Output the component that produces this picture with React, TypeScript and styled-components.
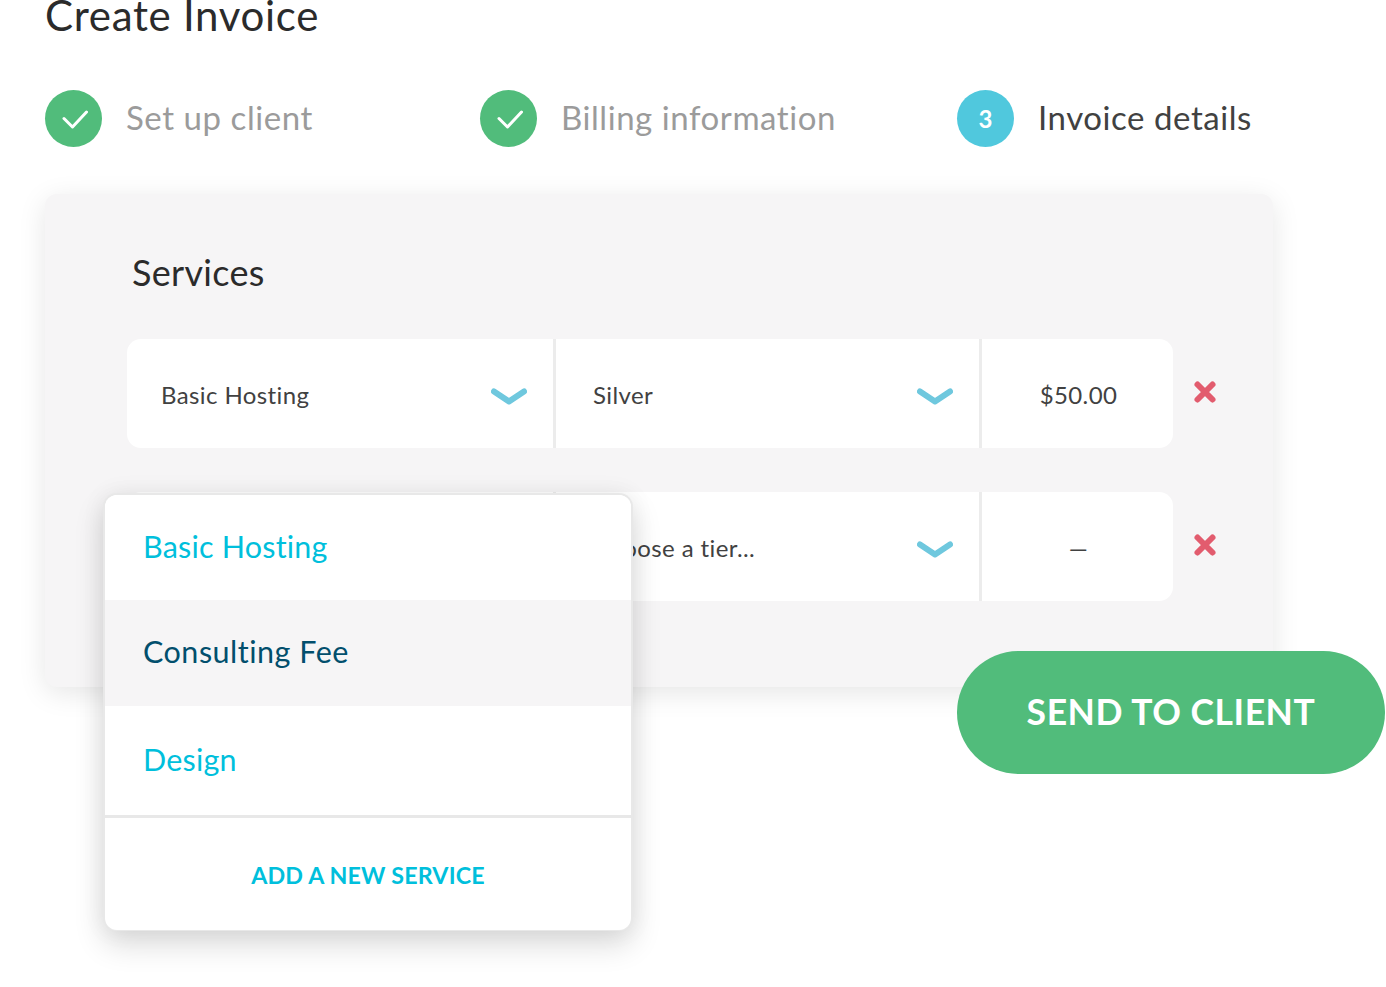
import styled, { createGlobalStyle } from 'styled-components';

const GlobalStyle = createGlobalStyle`
    html, body {
        margin: 0;
        padding: 0;
        background: #ffffff;
        overflow: hidden;
    }
    body {
        font-family: "Lato", "Open Sans", sans-serif;
    }
`;

const Page = styled.div`
    position: relative;
    width: 1386px;
    height: 987px;
    padding: 0 0 0 45px;
    box-sizing: border-box;
    overflow: hidden;
`;

const Title = styled.h1`
    margin: -10px 0 0 0;
    height: 50px;
    font-size: 42px;
    line-height: 50px;
    font-weight: 400;
    letter-spacing: 0.7px;
    color: #2b2b2b;
`;

const Stepper = styled.div`
    display: grid;
    grid-template-columns: 435px 477px auto;
    margin-top: 50px;
`;

const Step = styled.div`
    display: flex;
    align-items: center;
    gap: 24px;
`;

const StepCircle = styled.div<{ $color: string }>`
    width: 57px;
    height: 57px;
    border-radius: 50%;
    background: ${props => props.$color};
    color: #ffffff;
    display: flex;
    align-items: center;
    justify-content: center;
    font-size: 24px;
    font-weight: 700;
`;

const StepLabel = styled.span<{ $active?: boolean }>`
    margin-top: -4px;
    font-size: 33px;
    letter-spacing: 0.55px;
    color: ${props => (props.$active ? '#414141' : '#9b9b9b')};
`;

const Card = styled.section`
    position: relative;
    width: 1228px;
    height: 493px;
    margin-top: 47px;
    padding: 55px 0 0 82px;
    box-sizing: border-box;
    background: #f6f5f6;
    border-radius: 12px;
    box-shadow: 0 6px 28px rgba(0, 0, 0, 0.1);
`;

const CardTitle = styled.h2`
    margin: 0 0 0 5px;
    height: 46px;
    font-size: 36px;
    line-height: 46px;
    font-weight: 400;
    letter-spacing: 0.3px;
    color: #2b2b2b;
`;

const Rows = styled.div`
    display: flex;
    flex-direction: column;
    gap: 44px;
    margin-top: 44px;
`;

const Row = styled.div`
    display: flex;
    align-items: center;
    gap: 20px;
`;

const Fields = styled.div`
    display: grid;
    grid-template-columns: 429px 426px 191px;
    width: 1046px;
    height: 109px;
    background: #ffffff;
    border-radius: 14px;
`;

const Field = styled.div<{ $inset: number; $center?: boolean }>`
    display: flex;
    align-items: center;
    justify-content: ${props => (props.$center ? 'center' : 'space-between')};
    padding: 1px ${props => (props.$center ? 0 : 26)}px 0 ${props => props.$inset}px;
    font-size: 24px;
    letter-spacing: 0.4px;
    color: #414141;
    box-sizing: border-box;
    border-right: ${props => (props.$center ? 'none' : '3px solid #ececec')};
`;

const ChevronIcon = styled.svg`
    margin-top: 5px;
    flex: none;
`;

const Chevron = () => (
    <ChevronIcon width="36" height="18" viewBox="0 0 36 18" fill="none">
        <path d="M3 3.5 18 13.5 33 3.5" stroke="#6fc8de" strokeWidth="6" strokeLinecap="round" strokeLinejoin="round" />
    </ChevronIcon>
);

const RemoveIcon = styled.svg`
    margin-top: -3px;
    flex: none;
`;

const Remove = () => (
    <RemoveIcon width="24" height="24" viewBox="0 0 24 24" fill="none">
        <path d="M4.5 4.5 19.5 19.5M19.5 4.5 4.5 19.5" stroke="#e25c6e" strokeWidth="6" strokeLinecap="round" />
    </RemoveIcon>
);

const MenuShadow = styled.div`
    position: absolute;
    left: 58px;
    top: 299px;
    width: 530px;
    height: 438px;
    border-radius: 14px;
    background: #e8e8e8;
    box-shadow: 0 14px 30px rgba(0, 0, 0, 0.14), 0 0 24px rgba(0, 0, 0, 0.06);
`;

const Menu = styled.div`
    position: absolute;
    left: 60px;
    top: 301px;
    width: 526px;
    height: 435px;
    background: #ffffff;
    border-radius: 12px;
    overflow: hidden;
    display: flex;
    flex-direction: column;
`;

const MenuItem = styled.div<{ $height: number; $hover?: boolean }>`
    height: ${props => props.$height}px;
    flex: none;
    box-sizing: border-box;
    display: flex;
    align-items: center;
    padding: 0 0 4px 38px;
    font-size: 30.5px;
    letter-spacing: ${props => (props.$hover ? 0.5 : 0.2)}px;
    color: ${props => (props.$hover ? '#024f6d' : '#00bfdc')};
    background: ${props => (props.$hover ? '#f6f5f6' : '#ffffff')};
`;

const MenuFooter = styled.div`
    flex: 1;
    display: flex;
    align-items: center;
    justify-content: center;
    padding-top: 1px;
    border-top: 3px solid #e8e8e8;
    font-size: 23.25px;
    font-weight: 700;
    letter-spacing: 0.15px;
    color: #00bfdc;
`;

const SendButton = styled.button`
    position: absolute;
    left: 957px;
    top: 651px;
    width: 428px;
    height: 123px;
    padding: 0 0 2px;
    border: none;
    border-radius: 62px;
    background: #51bc7b;
    color: #ffffff;
    font-family: inherit;
    font-size: 35.5px;
    font-weight: 700;
    letter-spacing: 0.55px;
`;

const services = [
    { service: 'Basic Hosting', tier: 'Silver', price: '$50.00' },
    { service: 'Choose a service...', tier: 'Choose a tier...', price: '—' },
];

const steps = [
    { label: 'Set up client', done: true },
    { label: 'Billing information', done: true },
    { label: 'Invoice details', done: false },
];

export default function App() {
    return (
        <Page>
            <GlobalStyle />
            <Title>Create Invoice</Title>
            <Stepper>
                {steps.map((step, i) => (
                    <Step key={step.label}>
                        <StepCircle $color={step.done ? '#51bc7b' : '#50c8dd'}>
                            {step.done ? (
                                <svg width="28" height="22" viewBox="0 0 28 22" fill="none">
                                    <path d="M4 10.5 12.5 19 26.5 4" stroke="#fff" strokeWidth="3" strokeLinecap="round" strokeLinejoin="round" />
                                </svg>
                            ) : (
                                i + 1
                            )}
                        </StepCircle>
                        <StepLabel $active={!step.done}>{step.label}</StepLabel>
                    </Step>
                ))}
            </Stepper>
            <Card>
                <CardTitle>Services</CardTitle>
                <Rows>
                    {services.map(row => (
                        <Row key={row.service}>
                            <Fields>
                                <Field $inset={34}>
                                    {row.service}
                                    <Chevron />
                                </Field>
                                <Field $inset={37}>
                                    {row.tier}
                                    <Chevron />
                                </Field>
                                <Field $inset={2} $center>
                                    {row.price}
                                </Field>
                            </Fields>
                            <Remove />
                        </Row>
                    ))}
                </Rows>
                <MenuShadow />
                <Menu>
                    <MenuItem $height={105}>Basic Hosting</MenuItem>
                    <MenuItem $height={106} $hover>Consulting Fee</MenuItem>
                    <MenuItem $height={109}>Design</MenuItem>
                    <MenuFooter>ADD A NEW SERVICE</MenuFooter>
                </Menu>
            </Card>
            <SendButton>SEND TO CLIENT</SendButton>
        </Page>
    );
}
